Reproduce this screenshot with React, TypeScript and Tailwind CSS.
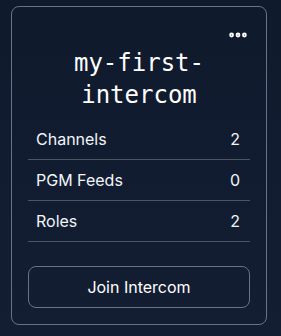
import { MoreHorizontal } from 'lucide-react';

interface Stat {
  label: string;
  value: number;
}

const stats: Stat[] = [
  { label: 'Channels', value: 2 },
  { label: 'PGM Feeds', value: 0 },
  { label: 'Roles', value: 2 },
];

export default function App() {
  return (
    <div className="min-h-screen bg-gradient-to-b from-[#101a2d] to-[#141e33] pt-[6px] pl-[11px] font-['Inter','Noto_Sans',sans-serif] text-[#f1f5f9]">
      <div className="w-[256px] rounded-lg border border-[#64748b] p-4">
        <div className="flex h-6 justify-end">
          <button className="mr-[1px] flex items-center text-white">
            <MoreHorizontal size={22} strokeWidth={3.2} />
          </button>
        </div>

        <h2 className="mb-2 text-center font-['DejaVu_Sans_Mono',monospace] text-2xl leading-8 text-white">
          my-first-
          <br />
          intercom
        </h2>

        <ul>
          {stats.map((s) => (
            <li
              key={s.label}
              className="flex h-[41px] items-center justify-between border-b border-[#4b5563] pl-2 pr-2.5 text-base"
            >
              <span>{s.label}</span>
              <span>{s.value}</span>
            </li>
          ))}
        </ul>

        <button className="mt-6 h-[42px] w-full rounded-lg border border-[#64748b] text-base text-white">
          Join Intercom
        </button>
      </div>
    </div>
  );
}
